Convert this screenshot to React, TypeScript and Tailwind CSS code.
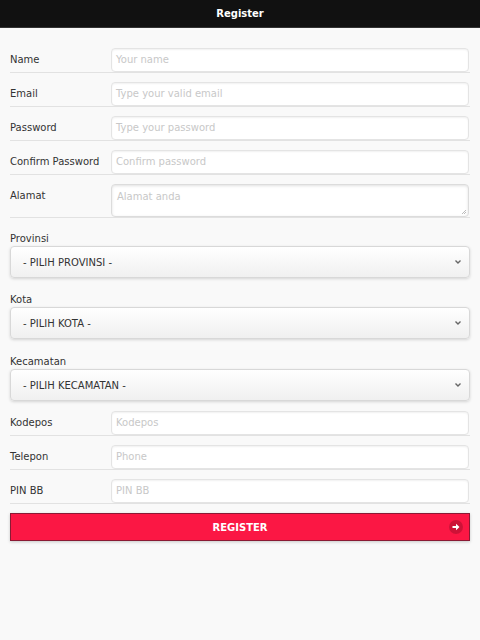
import React from "react";

const font = { fontFamily: '"DejaVu Sans", "Liberation Sans", sans-serif' };

function Row({ label, placeholder, textarea }: { label: string; placeholder: string; textarea?: boolean }) {
  return (
    <div className="flex items-start pt-[9px] border-b border-[#e2e2e2]">
      <div className={`w-[101px] shrink-0 text-[10px] text-[#333] ${textarea ? "pt-[4px]" : "leading-[24px]"}`}>{label}</div>
      {textarea ? (
        <div className="relative flex-1 h-[33px] rounded-[4px] border border-[#dcdcdc] bg-white shadow-[inset_0_1px_3px_rgba(0,0,0,0.12)] px-[5px] pt-[4px] text-[10px] text-[#c8c8c8] mr-[1px]">
          {placeholder}
          <svg className="absolute right-[1px] bottom-[1px]" width="6" height="6" viewBox="0 0 6 6">
            <path d="M5 1 L1 5 M5 3 L3 5" stroke="#aaa" strokeWidth="0.8" />
          </svg>
        </div>
      ) : (
        <div className="flex-1 h-[24px] rounded-[4px] border border-[#e4e4e4] bg-white shadow-[inset_0_1px_2px_rgba(0,0,0,0.06)] px-[4px] leading-[22px] text-[10px] text-[#c8c8c8] mr-[1px]">
          {placeholder}
        </div>
      )}
    </div>
  );
}

function Select({ label, value, pt }: { label: string; value: string; pt: string }) {
  return (
    <div className={pt}>
      <div className="text-[10px] text-[#333] leading-[15px]">{label}</div>
      <div className="flex items-center h-[32px] rounded-[4px] border border-[#d8d8d8] bg-gradient-to-b from-[#ffffff] to-[#f0f0f0] shadow-[0_1px_3px_rgba(0,0,0,0.15)] pl-[12px] pr-[7px]">
        <span className="flex-1 text-[10px] text-[#333]">{value}</span>
        <svg width="8" height="6" viewBox="0 0 8 6">
          <path d="M1.5 1.5 L4 4 L6.5 1.5" fill="none" stroke="#666" strokeWidth="1.4" />
        </svg>
      </div>
    </div>
  );
}

export default function App() {
  return (
    <div className="w-[480px] h-[640px] bg-[#f9f9f9]" style={font}>
      <div className="h-[28px] bg-[#111] flex items-center justify-center border-b border-[#333]">
        <span className="text-white text-[10px] font-bold">Register</span>
      </div>
      <div className="px-[10px] pt-[11px]">
        <Row label="Name" placeholder="Your name" />
        <Row label="Email" placeholder="Type your valid email" />
        <Row label="Password" placeholder="Type your password" />
        <Row label="Confirm Password" placeholder="Confirm password" />
        <Row label="Alamat" placeholder="Alamat anda" textarea />
        <Select label="Provinsi" value="- PILIH PROVINSI -" pt="pt-[13px]" />
        <Select label="Kota" value="- PILIH KOTA -" pt="pt-[14px]" />
        <Select label="Kecamatan" value="- PILIH KECAMATAN -" pt="pt-[15px]" />
        <div className="pt-[1px]">
          <Row label="Kodepos" placeholder="Kodepos" />
          <Row label="Telepon" placeholder="Phone" />
          <Row label="PIN BB" placeholder="PIN BB" />
        </div>
        <div className="mt-[9px] h-[28px] flex items-center bg-[#fb1744] border border-[#8a1a34] shadow-[0_1px_3px_rgba(0,0,0,0.2)] relative">
          <span className="flex-1 text-center text-white text-[10px] font-bold">REGISTER</span>
          <span className="absolute right-[6px] top-[6px] w-[14px] h-[14px] rounded-full bg-[rgba(0,0,0,0.18)] flex items-center justify-center">
            <svg width="10" height="10" viewBox="0 0 10 10">
              <path d="M1.5 4 H5 V1.8 L8.5 5 L5 8.2 V6 H1.5 Z" fill="#fff" />
            </svg>
          </span>
        </div>
      </div>
    </div>
  );
}
